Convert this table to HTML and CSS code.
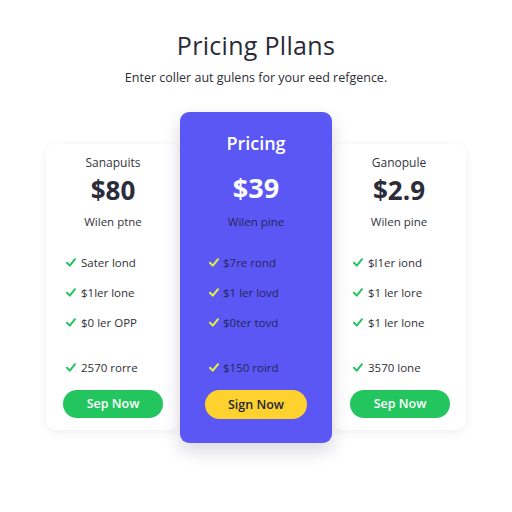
FILE: index.html
```html
<!DOCTYPE html>
<html>
<head>
<meta charset="utf-8">
<link rel="stylesheet" href="styles.css">
</head>
<body>
<div class="page">
  <h1 class="title">Pricing Pllans</h1>
  <p class="subtitle">Enter coller aut gulens for your eed refgence.</p>
  <div class="plans">
    <div class="card side left">
      <div class="name">Sanapuits</div>
      <div class="price">$80</div>
      <div class="desc">Wilen ptne</div>
      <ul class="features">
        <li><svg class="check" viewBox="0 0 10 9"><path d="M1 4.8 L3.8 7.6 L9 1.2"/></svg>Sater lond</li>
        <li><svg class="check" viewBox="0 0 10 9"><path d="M1 4.8 L3.8 7.6 L9 1.2"/></svg>$1ler lone</li>
        <li><svg class="check" viewBox="0 0 10 9"><path d="M1 4.8 L3.8 7.6 L9 1.2"/></svg>$0 ler OPP</li>
        <li class="last"><svg class="check" viewBox="0 0 10 9"><path d="M1 4.8 L3.8 7.6 L9 1.2"/></svg>2570 rorre</li>
      </ul>
      <div class="btn green">Sep Now</div>
    </div>
    <div class="card featured">
      <div class="name">Pricing</div>
      <div class="price">$39</div>
      <div class="desc">Wilen pine</div>
      <ul class="features">
        <li><svg class="check" viewBox="0 0 10 9"><path d="M1 4.8 L3.8 7.6 L9 1.2"/></svg>$7re rond</li>
        <li><svg class="check" viewBox="0 0 10 9"><path d="M1 4.8 L3.8 7.6 L9 1.2"/></svg>$1 ler lovd</li>
        <li><svg class="check" viewBox="0 0 10 9"><path d="M1 4.8 L3.8 7.6 L9 1.2"/></svg>$0ter tovd</li>
        <li class="last"><svg class="check" viewBox="0 0 10 9"><path d="M1 4.8 L3.8 7.6 L9 1.2"/></svg>$150 roird</li>
      </ul>
      <div class="btn yellow">Sign Now</div>
    </div>
    <div class="card side right">
      <div class="name">Ganopule</div>
      <div class="price">$2.9</div>
      <div class="desc">Wilen pine</div>
      <ul class="features">
        <li><svg class="check" viewBox="0 0 10 9"><path d="M1 4.8 L3.8 7.6 L9 1.2"/></svg>$l1er iond</li>
        <li><svg class="check" viewBox="0 0 10 9"><path d="M1 4.8 L3.8 7.6 L9 1.2"/></svg>$1 ler lore</li>
        <li><svg class="check" viewBox="0 0 10 9"><path d="M1 4.8 L3.8 7.6 L9 1.2"/></svg>$1 ler lone</li>
        <li class="last"><svg class="check" viewBox="0 0 10 9"><path d="M1 4.8 L3.8 7.6 L9 1.2"/></svg>3570 lone</li>
      </ul>
      <div class="btn green">Sep Now</div>
    </div>
  </div>
</div>
</body>
</html>
```
FILE: styles.css
```css
* { box-sizing: border-box; }
html, body { margin: 0; padding: 0; background: #ffffff; }
body { font-family: "Open Sans", "Noto Sans", sans-serif; color: #2b2b38; }
.page { width: 512px; height: 512px; padding-top: 30px; }
.title {
  margin: 0; text-align: center; font-size: 25px; font-weight: 500;
  line-height: 30px; color: #2a2a38; letter-spacing: 0.3px;
}
.subtitle {
  margin: 9px 0 0; text-align: center; font-size: 12.5px; line-height: 18px; color: #2e2e36;
}
.plans {
  display: flex; justify-content: center; align-items: flex-start; margin-top: 25px;
}
.card { display: flex; flex-direction: column; }
.side {
  width: 134px; height: 286px; margin-top: 32px; background: #fff;
  border-radius: 10px; box-shadow: 0 2px 10px rgba(30, 30, 60, 0.07);
  padding: 11px 0 0;
}
.featured {
  width: 152px; height: 331px; background: #5b57f4; border-radius: 9px;
  position: relative; z-index: 1; padding: 20px 0 0;
  box-shadow: 0 8px 18px rgba(40, 40, 90, 0.18);
}
.name { text-align: center; font-size: 12px; line-height: 16px; color: #34343f; }
.price { text-align: center; font-size: 26px; font-weight: 700; line-height: 28px; margin-top: 5px; color: #2c2c3a; }
.desc { text-align: center; font-size: 11.5px; line-height: 16px; margin-top: 10px; color: #34343f; }
.featured .name { font-size: 18px; font-weight: 600; line-height: 22px; color: #fff; }
.featured .price { font-size: 27px; line-height: 32px; margin-top: 18px; color: #fff; }
.featured .desc { color: #24245a; }
.features { list-style: none; margin: 25px 0 0; padding: 0; }
.features li { height: 30px; line-height: 16px; font-size: 11.5px; display: flex; align-items: flex-start; color: #2f2f38; }
.features li.last { margin-top: 15px; height: 30px; }
.left .features { padding-left: 20px; }
.right .features { padding-left: 21px; }
.featured .features { padding-left: 29px; }
.featured .features li { color: #25255a; }
.check {
  width: 10px; height: 9px; margin-top: 3px; margin-right: 5px; flex: none;
  fill: none; stroke: #22c55e; stroke-width: 2; stroke-linecap: round; stroke-linejoin: round;
}
.featured .check { stroke: #e3f23a; margin-right: 4px; }
.btn {
  margin: 0 auto; height: 28px; line-height: 28px; border-radius: 14px;
  text-align: center; font-size: 12.5px; font-weight: 600; width: 100px;
}
.green { background: #22c55e; color: #fff; }
.left .btn { margin-left: 17px; }
.right .btn { margin-left: 18px; }
.yellow { background: #fdd22e; color: #26263a; width: 102px; height: 29px; line-height: 29px; border-radius: 15px; }
```
